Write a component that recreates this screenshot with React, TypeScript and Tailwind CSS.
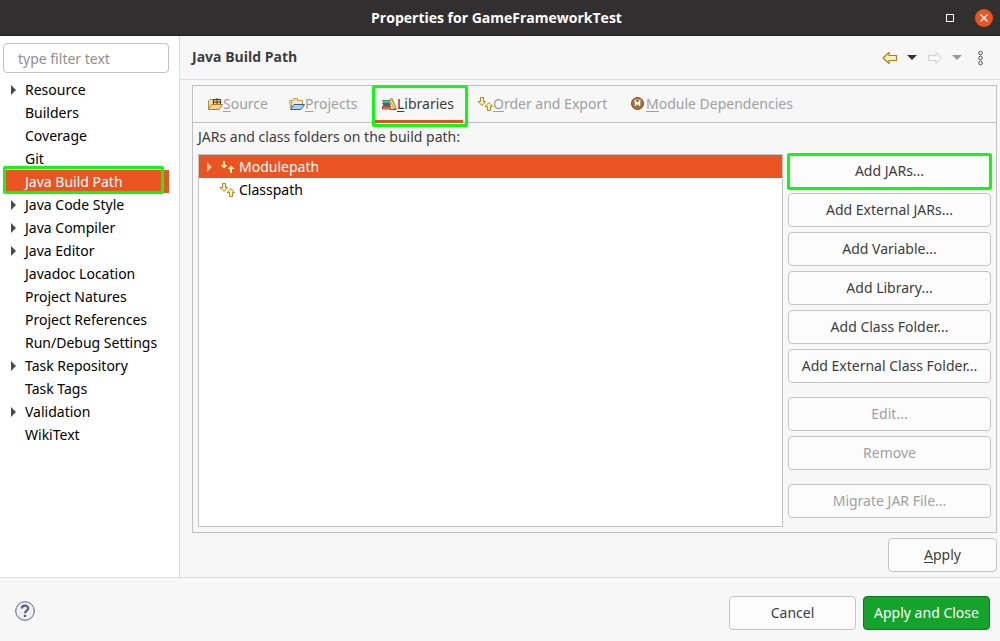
import type { ReactNode } from "react";

type TreeItem = { label: string; expandable?: boolean; selected?: boolean };

const categories: TreeItem[] = [
  { label: "Resource", expandable: true },
  { label: "Builders" },
  { label: "Coverage" },
  { label: "Git" },
  { label: "Java Build Path", selected: true },
  { label: "Java Code Style", expandable: true },
  { label: "Java Compiler", expandable: true },
  { label: "Java Editor", expandable: true },
  { label: "Javadoc Location" },
  { label: "Project Natures" },
  { label: "Project References" },
  { label: "Run/Debug Settings" },
  { label: "Task Repository", expandable: true },
  { label: "Task Tags" },
  { label: "Validation", expandable: true },
  { label: "WikiText" },
];

const buttonGroups = [
  {
    disabled: false,
    labels: [
      "Add JARs...",
      "Add External JARs...",
      "Add Variable...",
      "Add Library...",
      "Add Class Folder...",
      "Add External Class Folder...",
    ],
  },
  { disabled: true, labels: ["Edit...", "Remove"] },
  { disabled: true, labels: ["Migrate JAR File..."] },
];

function Expander({ className }: { className: string }) {
  return (
    <svg viewBox="0 0 5 10" className={`h-[10px] w-[5px] ${className}`} fill="currentColor" aria-hidden="true">
      <path d="M0 0 5 5 0 10z" />
    </svg>
  );
}

function SourceIcon() {
  return (
    <svg viewBox="0 0 16 16" className="size-4 shrink-0" aria-hidden="true">
      <path d="M1.500 13V5L3 3.500h3L7.500 5h5v8z" fill="#fbe3a4" stroke="#b9883a" />
      <rect x="6.500" y="3.500" width="7" height="5" fill="#e8c9a4" stroke="#5b3a2c" />
      <path d="M10 2v7M5.500 6h9" stroke="#5b3a2c" />
      <path d="M1.500 13.500 4.500 8.500h11l-3.500 5z" fill="#fcd98a" stroke="#b9782a" strokeLinejoin="round" />
    </svg>
  );
}

function ProjectsIcon() {
  return (
    <svg viewBox="0 0 16 16" className="size-4 shrink-0" aria-hidden="true">
      <path d="M2.500 12V4.500h2v-2h4v2h5V8" fill="#fbe7ae" stroke="#c99a45" strokeLinejoin="round" />
      <path d="M.5 4.500h2M.5 4.500l1 8" fill="none" stroke="#c99a45" />
      <path d="M1.500 13.500 5 8.500h10.500l-3.500 5z" fill="#a9d0f7" stroke="#2f5fb5" strokeLinejoin="round" />
    </svg>
  );
}

function LibrariesIcon() {
  return (
    <svg viewBox="0 0 16 16" className="size-4 shrink-0" aria-hidden="true">
      <path d="M1 4h8v4H1l1-2z" fill="#2c8c83" />
      <path d="M2.500 5.800H9" stroke="#b8ded2" strokeWidth=".8" />
      <path d="M2 7.500h7.500V10H2z" fill="#356b68" />
      <path d="M1 10h9v3.500H1z" fill="#b4502e" />
      <path d="M2 12h8" stroke="#e8a878" strokeWidth=".8" />
      <path d="m8.500 3.500 2.500-1.500 4.500 10.500-2.500 1z" fill="#e8a23c" stroke="#b87321" strokeWidth=".6" />
      <path d="m10 4.500 3.500 7.500" stroke="#fff0bd" strokeWidth=".8" />
      <path d="M9 13.500h6.500" stroke="#8b4b2a" />
    </svg>
  );
}

function PathIcon({ selected = false }: { selected?: boolean }) {
  return (
    <svg viewBox="0 0 16 16" className="size-4 shrink-0" aria-hidden="true">
      {selected ? (
        <g fill="#fff3a8">
          <path d="M4 2h2v4h2.500L5 9.500 1.500 6H4z" />
          <path d="M11 14h2v-4h2.500L12 6.500 8.500 10H11z" />
        </g>
      ) : (
        <g fill="#fff3b0" stroke="#b58423" strokeLinejoin="round">
          <path d="M3.500 1.500h3v4h2L5 9.500 1 5.500h2.500z" />
          <path d="M10.500 14.500h3v-4h2l-3.500-4-4 4h2.500z" />
        </g>
      )}
    </svg>
  );
}

function ModuleIcon() {
  return (
    <svg viewBox="0 0 16 16" className="size-4 shrink-0" aria-hidden="true">
      <circle cx="7.500" cy="7.500" r="6" fill="#a46f3c" stroke="#7f4d22" />
      <path d="M3 5.500a5 4 0 0 1 9 0" fill="none" stroke="#c99b6c" />
      <path d="M5.500 10V5.500l2 2.500 2-2.500V10" fill="none" stroke="#fff" strokeWidth="1.500" />
    </svg>
  );
}

function ArrowIcon({ forward = false }: { forward?: boolean }) {
  return (
    <svg viewBox="0 0 16 14" className="h-[14px] w-4" aria-hidden="true">
      {forward ? (
        <path d="M14.500 7 9 1.500v3H1.500v5H9v3z" fill="#f8f8f8" stroke="#d0d0d0" strokeLinejoin="round" />
      ) : (
        <path d="M1 7 7 1.500v3h7.500v5H7v3z" fill="#fff3b8" stroke="#b8791c" strokeWidth="1.200" strokeLinejoin="round" />
      )}
    </svg>
  );
}

function Caret() {
  return (
    <svg viewBox="0 0 10 5" className="h-[5px] w-[10px]" fill="currentColor" aria-hidden="true">
      <path d="M0 0h10L5 5z" />
    </svg>
  );
}

function Highlight({ className }: { className: string }) {
  return <span aria-hidden="true" className={`pointer-events-none absolute z-10 rounded-[2px] border-[3px] border-[#0dfc0d] ${className}`} />;
}

function Tab({ icon, label, width, active = false }: { icon: ReactNode; label: string; width: string; active?: boolean }) {
  return (
    <button
      type="button"
      role="tab"
      aria-selected={active}
      className={`relative flex items-center pl-[10px] whitespace-nowrap ${width} ${active ? "text-[#3d3d3d]" : "text-[#a0a0a0]"}`}
    >
      {icon}
      <span className="pb-[2px]">
        <span className="underline underline-offset-2">{label[0]}</span>
        {label.slice(1)}
      </span>
      {active && <span className="absolute inset-x-1 -bottom-px h-[3px] bg-[#d9532c]" />}
      {active && <Highlight className="-top-px -right-px -bottom-[5px] left-px" />}
    </button>
  );
}

const buttonBase = "h-[34px] rounded-[4px] border border-[#c4c4c4] bg-[#fcfcfc] pb-[2px] whitespace-nowrap";

export default function App() {
  return (
    <div className="flex min-h-screen flex-col bg-[#f7f7f7] font-['Noto_Sans',sans-serif] text-[14px] leading-[23px] text-[#3d3d3d]">
      <header className="grid h-9 grid-cols-[1fr_auto_1fr] items-center border-b border-[#1f1e1e] bg-[#322f30] pr-[7px] text-white">
        <h1 className="col-start-2 font-['Open_Sans','Noto_Sans',sans-serif] text-[14px] font-bold">Properties for GameFrameworkTest</h1>
        <div className="flex items-center justify-end gap-4">
          <button type="button" aria-label="Maximize" className="grid size-[18px] place-items-center">
            <span className="size-2 border border-white" />
          </button>
          <button type="button" aria-label="Close" className="grid size-[18px] place-items-center rounded-full bg-[#e95420]">
            <svg viewBox="0 0 8 8" className="size-2" stroke="white" strokeWidth="1.300" aria-hidden="true">
              <path d="m.5.5 7 7m0-7-7 7" />
            </svg>
          </button>
        </div>
      </header>

      <div className="flex grow">
        <aside className="w-[180px] shrink-0 border-r border-[#dcdcdc] bg-white pt-[7px] pr-[10px] pl-[3px]">
          <input
            type="text"
            aria-label="Filter"
            placeholder="type filter text"
            className="block h-[30px] w-full rounded-[4px] border border-[#c2c2c2] bg-white px-[14px] placeholder:text-[#8f8f8f]"
          />
          <ul role="tree" className="pt-[5px]">
            {categories.map(({ label, expandable, selected }) => (
              <li
                key={label}
                role="treeitem"
                aria-selected={!!selected}
                className={`relative flex h-[23px] items-center pl-2 whitespace-nowrap ${selected ? "bg-[#e95420] text-white" : "text-black"}`}
              >
                <span className="w-[14px] shrink-0">{expandable && <Expander className="text-[#4a4a4a]" />}</span>
                {label}
                {selected && <Highlight className="-top-1 right-[5px] -bottom-px left-0" />}
              </li>
            ))}
          </ul>
        </aside>

        <main className="flex min-w-0 grow flex-col">
          <div className="flex h-11 items-center justify-between border-b border-[#dcdcdc] pr-4 pl-3">
            <h2 className="pb-[2px] font-['Open_Sans','Noto_Sans',sans-serif] font-bold">Java Build Path</h2>
            <div className="flex items-center">
              <button type="button" aria-label="Back"><ArrowIcon /></button>
              <button type="button" aria-label="Back history" className="ml-[9px] text-[#333]"><Caret /></button>
              <button type="button" aria-label="Forward" disabled className="ml-[10px]"><ArrowIcon forward /></button>
              <button type="button" aria-label="Forward history" disabled className="ml-[9px] text-[#999]"><Caret /></button>
              <button type="button" aria-label="View menu" className="ml-4">
                <svg viewBox="0 0 6 16" className="h-4 w-[6px]" fill="none" stroke="#555" aria-hidden="true">
                  <circle cx="2.500" cy="3" r="1.800" />
                  <circle cx="2.500" cy="8" r="1.800" />
                  <circle cx="2.500" cy="13" r="1.800" />
                </svg>
              </button>
            </div>
          </div>

          <section className="mt-[5px] mr-[3px] ml-3 flex grow flex-col border border-[#c0c0c0]">
            <div role="tablist" className="flex h-[37px] border-b border-[#c0c0c0] pl-1">
              <Tab icon={<SourceIcon />} label="Source" width="w-[82px]" />
              <Tab icon={<ProjectsIcon />} label="Projects" width="w-[92px]" />
              <Tab icon={<LibrariesIcon />} label="Libraries" width="w-[96px]" active />
              <Tab icon={<PathIcon />} label="Order and Export" width="w-[153px]" />
              <Tab icon={<ModuleIcon />} label="Module Dependencies" width="w-[183px]" />
            </div>
            <div className="flex grow flex-col px-[5px] pt-[2px] pb-[5px]">
              <p id="path-label">JARs and class folders on the build path:</p>
              <div className="mt-[6px] flex grow gap-[5px]">
                <ul role="tree" aria-labelledby="path-label" className="grow border border-[#c0c0c0] bg-white">
                  <li role="treeitem" aria-selected="true" className="flex h-[23px] items-center bg-[#e95420] pl-2 text-white">
                    <span className="w-3 shrink-0"><Expander className="text-[#f7c1ac]" /></span>
                    <PathIcon selected />
                    <span className="pl-1">Modulepath</span>
                  </li>
                  <li role="treeitem" aria-selected="false" className="flex h-[23px] items-center pl-5 text-black">
                    <PathIcon />
                    <span className="pl-1">Classpath</span>
                  </li>
                </ul>
                <div className="flex w-[203px] shrink-0 flex-col gap-[14px]">
                  {buttonGroups.map(({ disabled, labels }) => (
                    <div key={labels[0]} className="flex flex-col gap-[5px]">
                      {labels.map((label) => (
                        <button key={label} type="button" disabled={disabled} className={`relative ${buttonBase} ${disabled ? "text-[#a0a0a0]" : ""}`}>
                          {label}
                          {label === "Add JARs..." && <Highlight className="-inset-x-[2px] -top-[2px] -bottom-[3px]" />}
                        </button>
                      ))}
                    </div>
                  ))}
                </div>
              </div>
            </div>
          </section>
          <div className="flex justify-end py-[5px] pr-[3px]">
            <button type="button" className={`w-[109px] ${buttonBase}`}>
              <span className="underline underline-offset-2">A</span>pply
            </button>
          </div>
        </main>
      </div>

      <footer className="flex h-16 items-start border-t border-[#dcdcdc] pt-[18px] pr-[10px] pl-[15px]">
        <button type="button" aria-label="Help" className="mt-[5px]">
          <svg viewBox="0 0 20 20" className="size-5" fill="none" stroke="#53627c" aria-hidden="true">
            <circle cx="10" cy="10" r="9.300" fill="#eef0f3" />
            <path d="M6.800 7.500C6.800 3.800 13.200 3.800 13.200 7.200c0 2.400-3.200 2.400-3.200 5" strokeWidth="2.200" />
            <path d="M10 13.800v2.200" strokeWidth="2.200" />
          </svg>
        </button>
        <div className="ml-auto flex gap-[7px]">
          <button type="button" className={`w-[127px] ${buttonBase}`}>Cancel</button>
          <button type="button" className="h-[34px] w-[127px] rounded-[4px] border border-[#0d7a20] bg-[#14a32b] pb-[2px] whitespace-nowrap text-white">
            Apply and Close
          </button>
        </div>
      </footer>
    </div>
  );
}
